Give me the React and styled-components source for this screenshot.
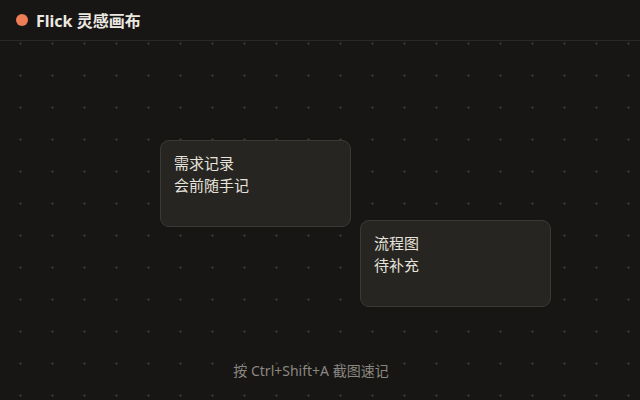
import React from 'react'
import styled, { createGlobalStyle } from 'styled-components'

const GlobalStyle = createGlobalStyle`
  html, body {
    margin: 0;
    padding: 0;
    background: #171615;
  }
  body {
    font-family: "Noto Sans", "Noto Sans CJK SC", sans-serif;
    color: #e9e6df;
  }
`

const dotSvg = encodeURIComponent(
  `<svg xmlns="http://www.w3.org/2000/svg" width="32" height="32"><g fill="#35342f"><rect x="19" y="11" width="3" height="1"/><rect x="20" y="10" width="1" height="3"/></g></svg>`
)

const Page = styled.div`
  width: 640px;
  height: 400px;
  display: flex;
  flex-direction: column;
  overflow: hidden;
  background-color: #171615;
  background-image: url("data:image/svg+xml,${dotSvg}");
  background-size: 32px 32px;
`

const Header = styled.header`
  height: 40px;
  flex: none;
  display: flex;
  align-items: center;
  gap: 8px;
  padding: 0 16px;
  background: #171615;
  border-bottom: 1px solid #2a2926;
`

const Dot = styled.span`
  width: 12px;
  height: 12px;
  border-radius: 50%;
  background: #ef7d58;
`

const Title = styled.h1`
  margin: 0;
  font-size: 16px;
  font-weight: 700;
  color: #ece9e2;
`

const Canvas = styled.main`
  position: relative;
  flex: 1;
  display: flex;
  flex-direction: column;
  justify-content: flex-end;
  align-items: center;
  padding: 0 18px 20px 0;
`

const Note = styled.div`
  position: absolute;
  left: ${p => p.$x}px;
  top: ${p => p.$y}px;
  width: 191px;
  height: 87px;
  box-sizing: border-box;
  padding: 11px 13px;
  background: #262522;
  border: 1px solid #3a3935;
  border-radius: 9px;
  font-family: "Noto Sans CJK SC", sans-serif;
  font-size: 15px;
  line-height: 22px;
  color: #e6e3dc;
`

const Hint = styled.div`
  font-family: "Noto Sans", "Noto Sans CJK SC", sans-serif;
  font-size: 14px;
  color: #8b8780;
`

const notes = [
  { x: 160, y: 99, lines: ['需求记录', '会前随手记'] },
  { x: 360, y: 179, lines: ['流程图', '待补充'] },
]

export default function App() {
  return (
    <>
      <GlobalStyle />
      <Page>
        <Header>
          <Dot />
          <Title>Flick 灵感画布</Title>
        </Header>
        <Canvas>
          {notes.map((n, i) => (
            <Note key={i} $x={n.x} $y={n.y}>
              {n.lines.map(l => <div key={l}>{l}</div>)}
            </Note>
          ))}
          <Hint>按 Ctrl+Shift+A 截图速记</Hint>
        </Canvas>
      </Page>
    </>
  )
}
